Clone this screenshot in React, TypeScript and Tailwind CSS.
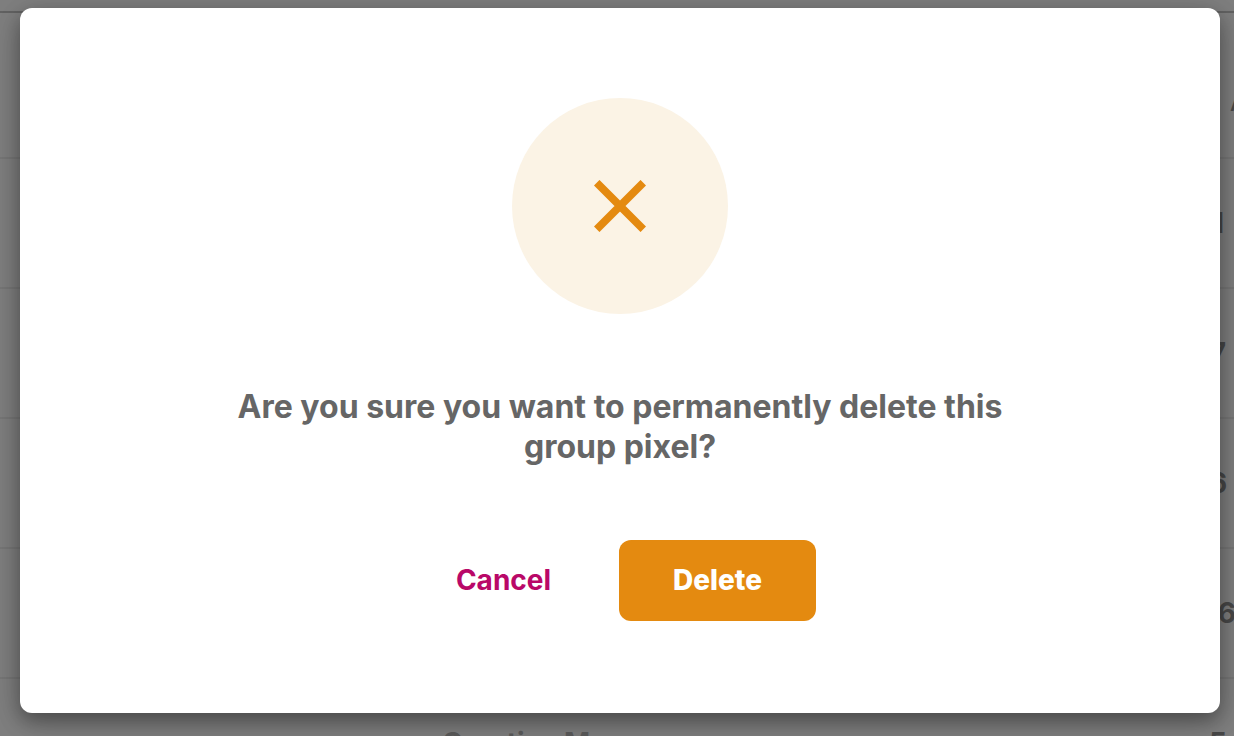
import { useId } from "react";

const rows = [
  { name: "", count: "1" },
  { name: "", count: "7" },
  { name: "", count: "6" },
  { name: "", count: "26" },
  { name: "Creative M", count: "5" },
];

function PixelTable() {
  return (
    <div className="overflow-hidden pt-[11px]" aria-hidden="true">
      <table className="w-[1500px] table-fixed border-collapse text-left text-[28px] leading-8 font-bold text-[#909090]">
        <thead>
          <tr className="h-[146px] border-y-2 border-t-[#c4c4c4] border-b-[#eeeeee]">
            <th className="w-[442px]" />
            <th className="w-[740px]" />
            <th className="w-[72px] pt-9 pl-12 text-2xl font-medium">Action</th>
            <th />
          </tr>
        </thead>
        <tbody>
          {rows.map((row) => (
            <tr key={row.count} className="h-[130px] border-b-2 border-[#eeeeee]">
              <td />
              <td className="text-[#b8b8b8]">{row.name}</td>
              <td className="text-center">{row.count}</td>
              <td />
            </tr>
          ))}
        </tbody>
      </table>
    </div>
  );
}

function DeleteDialog() {
  const titleId = useId();
  return (
    <div
      role="dialog"
      aria-modal="true"
      aria-labelledby={titleId}
      className="flex w-full max-w-[1200px] flex-col items-center rounded-xl bg-white px-50 pt-[90px] pb-[92px] shadow-[0_8px_20px_rgba(0,0,0,0.35),0_8px_40px_rgba(0,0,0,0.15)]"
    >
      <div className="flex size-54 items-center justify-center rounded-full bg-[#fbf3e5]">
        <svg
          viewBox="0 0 52 52"
          className="size-13"
          fill="none"
          stroke="#e48a10"
          strokeWidth="7.8"
          aria-hidden="true"
        >
          <path d="M2.7 2.7 49.3 49.3M49.3 2.7 2.7 49.3" />
        </svg>
      </div>
      <h2
        id={titleId}
        className="mt-[73px] text-center text-[32px] leading-10 font-bold text-[#666666]"
      >
        Are you sure you want to permanently delete this group pixel?
      </h2>
      <div className="mt-[73px] flex gap-9">
        <button type="button" className="h-[81px] rounded-xl px-8 pb-0.5 text-[28px] font-bold text-[#b90868]">
          Cancel
        </button>
        <button
          type="button"
          className="h-[81px] rounded-xl bg-[#e48a10] px-[54px] pb-0.5 text-[28px] font-extrabold text-white"
        >
          Delete
        </button>
      </div>
    </div>
  );
}

export default function App() {
  return (
    <main className="relative h-screen overflow-hidden bg-white font-['Inter',sans-serif] antialiased">
      <PixelTable />
      <div className="absolute inset-0 flex items-start justify-center bg-black/50 pt-2 pr-3.5 pl-5">
        <DeleteDialog />
      </div>
    </main>
  );
}
